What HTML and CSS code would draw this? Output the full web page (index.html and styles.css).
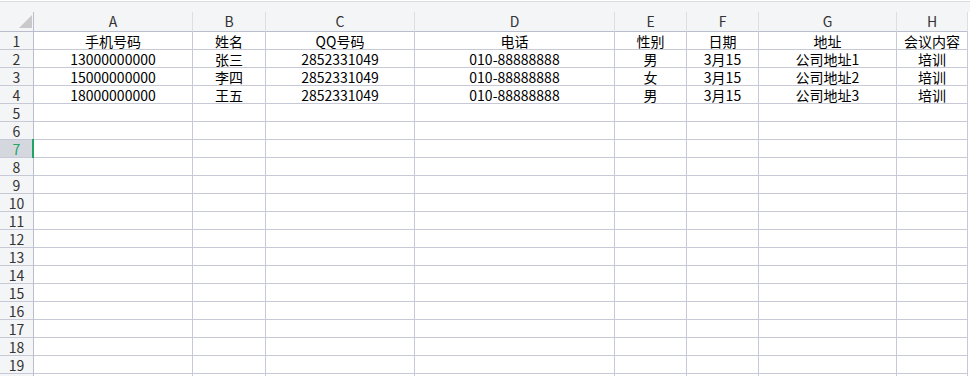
FILE: index.html
```html
<!DOCTYPE html>
<html lang="zh-CN">
    <head>
        <meta charset="UTF-8" />
        <meta name="viewport" content="width=device-width, initial-scale=1.0" />
        <title>会议名单</title>
        <link rel="stylesheet" href="styles.css">
    </head>
    <body>
        <div class="topline"></div>
        <div class="strip"></div>
        <div id="sheet" class="sheet">
            <div class="corner"><span class="tri"></span></div>
            <div class="col-head">A</div>
            <div class="col-head">B</div>
            <div class="col-head">C</div>
            <div class="col-head">D</div>
            <div class="col-head">E</div>
            <div class="col-head">F</div>
            <div class="col-head">G</div>
            <div class="col-head">H</div>
        </div>

        <script>
            const rows = [
                ["手机号码", "姓名", "QQ号码", "电话", "性别", "日期", "地址", "会议内容"],
                ["13000000000", "张三", "2852331049", "010-88888888", "男", "3月15", "公司地址1", "培训"],
                ["15000000000", "李四", "2852331049", "010-88888888", "女", "3月15", "公司地址2", "培训"],
                ["18000000000", "王五", "2852331049", "010-88888888", "男", "3月15", "公司地址3", "培训"]
            ];

            const sheet = document.querySelector("#sheet");

            // 19 full rows, the 20th is only a sliver at the bottom
            for (let r = 1; r <= 20; r++) {
                const head = document.createElement("div");
                head.className = "row-head";
                if (r === 7) head.classList.add("current");
                if (r < 20) head.textContent = r;
                sheet.appendChild(head);

                const data = rows[r - 1] || [];
                for (let c = 0; c < 8; c++) {
                    const cell = document.createElement("div");
                    cell.className = "cell";
                    if (r === 7 && c === 0) cell.classList.add("active");
                    cell.textContent = data[c] || "";
                    sheet.appendChild(cell);
                }
            }
        </script>
    </body>
</html>
```

FILE: styles.css
```css
body {
    font-family: "Noto Sans CJK SC", "Noto Sans", sans-serif;
    margin: 0;
    padding: 0;
    background-color: #fff;
    width: 970px;
    height: 376px;
    overflow: hidden;
}

.topline {
    height: 1px;
    border-bottom: 1px solid #dadbde;
}

.strip {
    height: 10px;
    background-color: #f4f5f7;
}

.sheet {
    display: grid;
    grid-template-columns: 34px 159px 73px 149px 200px 72px 72px 138px 71px;
}

.corner,
.col-head {
    height: 20px;
    box-sizing: border-box;
    background-color: #f4f5f7;
    border-bottom: 1px solid #b9bdcc;
    border-right: 1px solid #dcdee4;
}

.corner {
    position: relative;
    margin-top: -10px;
    height: 30px;
    border-right: none;
}

.corner::after {
    content: "";
    position: absolute;
    right: 0;
    top: 10px;
    bottom: 0;
    width: 1px;
    background-color: #b9bdcc;
}

.tri {
    position: absolute;
    right: 2px;
    bottom: 3px;
    width: 0;
    height: 0;
    border-left: 13px solid transparent;
    border-bottom: 13px solid #c9c9cb;
}

.col-head {
    font-size: 14px;
    line-height: 19px;
    text-align: center;
    color: #333;
}

.row-head {
    height: 18px;
    box-sizing: border-box;
    padding-top: 1px;
    background-color: #f4f5f7;
    border-bottom: 1px solid #c7cad6;
    border-right: 1px solid #b9bdcc;
    font-size: 14px;
    line-height: 16px;
    text-align: center;
    color: #333;
}

.row-head.current {
    background-color: #d4d7dd;
    color: #22a566;
}

.cell {
    position: relative;
    height: 18px;
    box-sizing: border-box;
    padding-top: 1px;
    border-bottom: 1px solid #c7cad6;
    border-right: 1px solid #c7cad6;
    font-size: 14px;
    line-height: 16px;
    text-align: center;
    color: #000;
    white-space: nowrap;
}

.cell.active::before {
    content: "";
    position: absolute;
    left: -2px;
    top: -1px;
    bottom: -1px;
    width: 2px;
    background-color: #21a366;
}
```
